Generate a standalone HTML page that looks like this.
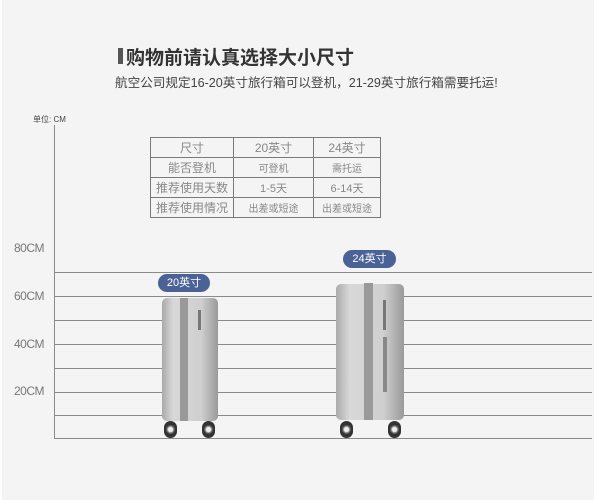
<!DOCTYPE html>
<html><head><meta charset="utf-8"><style>
body{margin:0;width:596px;height:502px;background:#fff;overflow:hidden;font-family:"Liberation Sans","Noto Sans CJK SC",sans-serif;}
#c{position:absolute;left:2px;top:0;width:592px;height:500px;background:#f4f4f4;}
.a{position:absolute;}
.hl{position:absolute;left:53px;width:537px;height:1px;background:#8a8a8a;}
.lbl{position:absolute;left:12px;font-size:12px;color:#777;letter-spacing:-0.5px;}
table{position:absolute;left:148px;top:137px;border-collapse:collapse;font-size:12px;color:#888;}
td{border:1px solid #7a7a7a;height:19px;padding:0;text-align:center;}
.badge{position:absolute;background:#4a6296;color:#fff;font-size:11px;border-radius:9px;text-align:center;height:18px;line-height:18px;}
.w{position:absolute;width:13px;height:17px;border-radius:7px;background:radial-gradient(circle,#eee 20%,#888 30%,#333 45%);}
</style></head><body><div id="c">
<div class="a" style="left:116px;top:48px;width:5px;height:16px;background:#555"></div>
<div class="a" style="left:124px;top:43px;font-size:19px;font-weight:bold;color:#333">购物前请认真选择大小尺寸</div>
<div class="a" style="left:113px;top:72px;font-size:12.6px;color:#444">航空公司规定16-20英寸旅行箱可以登机，21-29英寸旅行箱需要托运!</div>
<div class="a" style="left:31px;top:114px;font-size:8px;color:#444">单位: CM</div>
<div class="a" style="left:52px;top:125px;width:1px;height:314px;background:#8a8a8a"></div>
<table>
<tr><td style="width:82px">尺寸</td><td style="width:79px">20英寸</td><td style="width:66px">24英寸</td></tr>
<tr><td>能否登机</td><td style="font-size:10px">可登机</td><td style="font-size:10px">需托运</td></tr>
<tr><td>推荐使用天数</td><td style="font-size:11px">1-5天</td><td style="font-size:11px">6-14天</td></tr>
<tr><td>推荐使用情况</td><td style="font-size:10px">出差或短途</td><td style="font-size:10px">出差或短途</td></tr>
</table>
<div class="hl" style="top:272px"></div><div class="hl" style="top:296px"></div><div class="hl" style="top:320px"></div><div class="hl" style="top:344px"></div><div class="hl" style="top:368px"></div><div class="hl" style="top:392px"></div><div class="hl" style="top:415px"></div><div class="hl" style="top:438px"></div>
<div class="lbl" style="top:241px">80CM</div><div class="lbl" style="top:289px">60CM</div><div class="lbl" style="top:337px">40CM</div><div class="lbl" style="top:384px">20CM</div>
<div class="a" style="left:160px;top:298px;width:56px;height:123px;background:linear-gradient(90deg,#aaa,#d8d8d8 20%,#cfcfcf 70%,#999);border-radius:5px"></div>
<div class="a" style="left:178px;top:298px;width:8px;height:123px;background:#999"></div>
<div class="a" style="left:196px;top:310px;width:3px;height:20px;background:#777"></div>
<div class="w" style="left:162px;top:421px"></div><div class="w" style="left:200px;top:421px"></div>
<div class="a" style="left:334px;top:284px;width:68px;height:136px;background:linear-gradient(90deg,#aaa,#d8d8d8 20%,#cfcfcf 70%,#999);border-radius:5px"></div>
<div class="a" style="left:362px;top:283px;width:9px;height:137px;background:#999"></div>
<div class="a" style="left:381px;top:300px;width:3px;height:30px;background:#777"></div>
<div class="a" style="left:381px;top:337px;width:4px;height:55px;background:#888"></div>
<div class="w" style="left:338px;top:421px"></div><div class="w" style="left:386px;top:421px"></div>
<div class="badge" style="left:156px;top:274px;width:52px">20英寸</div>
<div class="badge" style="left:341px;top:250px;width:53px">24英寸</div>
</div></body></html>
